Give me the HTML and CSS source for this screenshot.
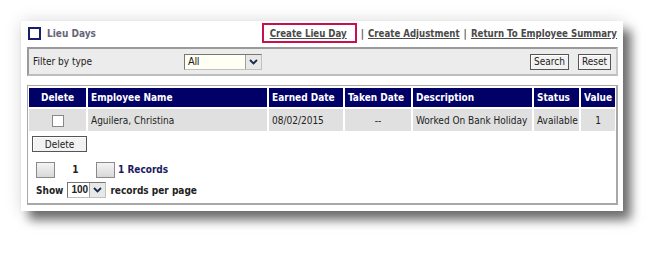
FILE: index.html
```html
<!DOCTYPE html>
<html>
<head>
    <link rel="stylesheet" href="styles.css">
</head>
<body>
    <div class="card">
        <!-- Title + action links -->
        <div class="head">
            <span class="title"><span class="title-box"></span>Lieu Days</span>
            <span class="links">
                <a class="link link-active" href="#">Create Lieu Day</a>
                <span class="sep">|</span>
                <a class="link" href="#">Create Adjustment</a>
                <span class="sep">|</span>
                <a class="link" href="#">Return To Employee Summary</a>
            </span>
        </div>

        <!-- Filter bar -->
        <div class="filter">
            <span class="filter-label">Filter by type</span>
            <span class="dropdown dropdown-type">
                <span class="dropdown-value">All</span>
                <span class="dropdown-arrow">
                    <svg width="9" height="6" viewBox="0 0 9 6"><path d="M1 1 L4.5 4.5 L8 1" fill="none" stroke="#1a2a4a" stroke-width="1.8"/></svg>
                </span>
            </span>
            <span class="filter-buttons">
                <button class="btn">Search</button>
                <button class="btn">Reset</button>
            </span>
        </div>

        <!-- Results -->
        <div class="results">
            <table class="grid">
                <colgroup>
                    <col class="c-delete">
                    <col class="c-name">
                    <col class="c-earned">
                    <col class="c-taken">
                    <col class="c-desc">
                    <col class="c-status">
                    <col class="c-value">
                </colgroup>
                <tr>
                    <th class="center">Delete</th>
                    <th>Employee Name</th>
                    <th>Earned Date</th>
                    <th>Taken Date</th>
                    <th>Description</th>
                    <th>Status</th>
                    <th>Value</th>
                </tr>
                <tr>
                    <td class="center"><span class="check"></span></td>
                    <td>Aguilera, Christina</td>
                    <td>08/02/2015</td>
                    <td class="center">--</td>
                    <td>Worked On Bank Holiday</td>
                    <td>Available</td>
                    <td class="center">1</td>
                </tr>
            </table>

            <button class="btn btn-delete">Delete</button>

            <div class="pager">
                <span class="page-btn"></span>
                <span class="page-num">1</span>
                <span class="page-btn"></span>
                <span class="page-count">1 Records</span>
            </div>

            <div class="per-page">
                <span>Show</span>
                <span class="dropdown dropdown-size">
                    <span class="dropdown-value">100</span>
                    <span class="dropdown-arrow">
                        <svg width="9" height="6" viewBox="0 0 9 6"><path d="M1 1 L4.5 4.5 L8 1" fill="none" stroke="#1a2a4a" stroke-width="1.8"/></svg>
                    </span>
                </span>
                <span>records per page</span>
            </div>
        </div>
    </div>
</body>
</html>
```

FILE: styles.css
```css
html {
    background: #ffffff;
}

body {
    margin: 0;
    padding: 21px 0 43px 21px;
    font-family: "DejaVu Sans Condensed", "DejaVu Sans", sans-serif;
    font-size: 10px;
    color: #222222;
}

.card {
    width: 602px;
    height: 190px;
    padding: 2px 5px 0 6px;
    box-sizing: border-box;
    background: #ffffff;
    box-shadow: 8px 9px 10px rgba(0, 0, 0, 0.55), 0 0 16px rgba(0, 0, 0, 0.14);
}

/* header */

.head {
    display: flex;
    align-items: center;
    justify-content: space-between;
    height: 20px;
}

.title {
    display: flex;
    align-items: center;
    gap: 6px;
    margin-left: 1px;
    font-weight: bold;
    color: #666677;
}

.title-box {
    width: 9px;
    height: 9px;
    border: 2px solid #1c1c6e;
}

.links {
    display: flex;
    align-items: center;
    height: 20px;
    margin-right: 1px;
}

.link {
    color: #4a4a4a;
    font-weight: bold;
    font-size: 9.6px;
    text-decoration: underline;
}

.link-active {
    display: flex;
    align-items: center;
    height: 16px;
    padding: 0 8px 0 6px;
    border: 2px solid #c8104f;
}

.sep {
    margin: 0 4px;
    color: #555555;
    font-weight: bold;
}

/* filter bar */

.filter {
    display: flex;
    align-items: center;
    margin-top: 4px;
    height: 25px;
    padding: 0 5px 0 4px;
    background: #ececec;
    border: 2px solid;
    border-color: #9a9a9a #c8c8c8 #bdbdbd #9a9a9a;
}

.filter-label {
    width: 151px;
}

.dropdown {
    display: flex;
    height: 14px;
    background: #fffff4;
    border: 1px solid;
    border-color: #777777 #c0c0c0 #c0c0c0 #777777;
}

.dropdown-type {
    width: 76px;
}

.dropdown-size {
    width: 37px;
    background: #ffffff;
}

.dropdown-value {
    flex: 1;
    padding-left: 3px;
    line-height: 14px;
    font-family: "Liberation Sans", sans-serif;
    font-size: 10px;
}

.dropdown-arrow {
    display: flex;
    align-items: center;
    justify-content: center;
    width: 15px;
    background: #e8e8e8;
    border-left: 1px solid #a0a0a0;
}

.filter-buttons {
    display: flex;
    gap: 9px;
    margin-left: auto;
}

.btn {
    height: 16px;
    padding: 0 3px;
    background: #f2f2f2;
    border: 1px solid #555555;
    box-shadow: inset 1px 1px 0 #ffffff;
    font-family: "DejaVu Sans Condensed", "DejaVu Sans", sans-serif;
    font-size: 10px;
    color: #222222;
}

/* results panel */

.results {
    margin-top: 9px;
    height: 117px;
    border: 1px solid #a8a8a8;
    border-right-width: 2px;
    border-bottom-width: 2px;
}

.grid {
    width: 590px;
    table-layout: fixed;
    border-spacing: 2px;
    margin-left: -1px;
}

.c-delete { width: 57px; }
.c-name { width: 179px; }
.c-earned { width: 74px; }
.c-taken { width: 66px; }
.c-desc { width: 119px; }
.c-status { width: 45px; }
.c-value { width: 34px; }

.grid th {
    height: 19px;
    padding: 0 3px;
    background: #000066;
    color: #ffffff;
    font-size: 10px;
    text-align: left;
    white-space: nowrap;
}

.grid td {
    height: 22px;
    padding: 0 3px;
    background: #e0e0e0;
    white-space: nowrap;
}

.grid .center {
    text-align: center;
}

.check {
    display: inline-block;
    width: 10px;
    height: 10px;
    margin-top: 3px;
    background: #ffffff;
    border: 1px solid #888888;
}

.btn-delete {
    display: block;
    width: 55px;
    margin: 3px 0 0 4px;
}

.pager {
    display: flex;
    align-items: center;
    margin: 10px 0 0 8px;
    height: 15px;
    font-weight: bold;
}

.page-btn {
    width: 17px;
    height: 14px;
    background: linear-gradient(#f4f4f4, #d8d8d8);
    border: 1px solid #8a8a8a;
}

.page-num {
    width: 41px;
    text-align: center;
}

.page-count {
    margin-left: 3px;
    color: #1a1a60;
}

.per-page {
    display: flex;
    align-items: center;
    gap: 4px;
    height: 16px;
    margin: 5px 0 0 8px;
    font-weight: bold;
}
```
